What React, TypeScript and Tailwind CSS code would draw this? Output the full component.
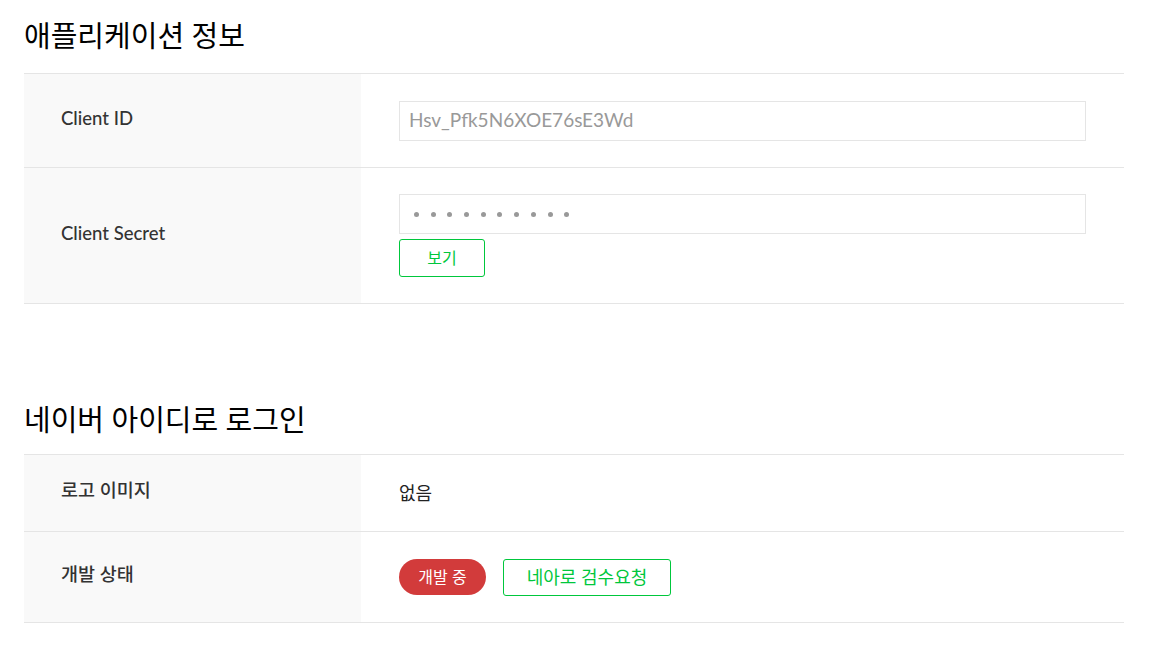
import React from "react";

const font = { fontFamily: 'Lato, "Noto Sans CJK KR", sans-serif' };

function Row({ label, children, className = "" }: { label: string; children: React.ReactNode; className?: string }) {
  return (
    <div className={`flex border-b border-[#e5e5e5] ${className}`}>
      <div className="w-[337px] shrink-0 bg-[#f9f9f9] pl-[37px] pb-[4px] flex items-center text-[18.5px] font-medium text-[#333]">{label}</div>
      <div className="flex-1 pl-[38px] flex flex-col justify-center">{children}</div>
    </div>
  );
}

export default function App() {
  return (
    <div className="bg-white min-h-[655px] px-[24px] w-[1100px] box-content" style={font}>
      <h2 className="text-[29px] leading-[40px] text-black pt-[16px] pb-[17px]">애플리케이션 정보</h2>
      <div className="border-t border-[#e5e5e5]">
        <Row label="Client ID" className="h-[94px]">
          <div className="w-[687px] h-[40px] border border-[#e5e5e5] flex items-center px-[9px] text-[19px] text-[#999]">Hsv_Pfk5N6XOE76sE3Wd</div>
        </Row>
        <Row label="Client Secret" className="h-[136px]">
          <div className="w-[687px] h-[40px] border border-[#e5e5e5] flex items-center pl-[14px] gap-[11.7px]">
            {Array.from({ length: 10 }).map((_, i) => (
              <span key={i} className="w-[5px] h-[5px] rounded-full bg-[#999]" />
            ))}
          </div>
          <button className="mt-[5px] w-[86px] h-[38px] border border-[#00c73c] rounded-[3px] text-[#00c73c] text-[16px] bg-white">보기</button>
        </Row>
      </div>

      <h2 className="text-[29px] leading-[40px] text-black pt-[96px] pb-[14px]">네이버 아이디로 로그인</h2>
      <div className="border-t border-[#e5e5e5]">
        <Row label="로고 이미지" className="h-[77px]">
          <div className="text-[18px] text-[#222]">없음</div>
        </Row>
        <Row label="개발 상태" className="h-[91px]">
          <div className="flex items-center gap-[17px]">
            <span className="w-[87px] h-[36px] rounded-full bg-[#d23b3b] text-white text-[16px] flex items-center justify-center">개발 중</span>
            <button className="w-[168px] h-[37px] border border-[#00c73c] rounded-[3px] text-[#00c73c] text-[18px] bg-white">네아로 검수요청</button>
          </div>
        </Row>
      </div>
    </div>
  );
}
